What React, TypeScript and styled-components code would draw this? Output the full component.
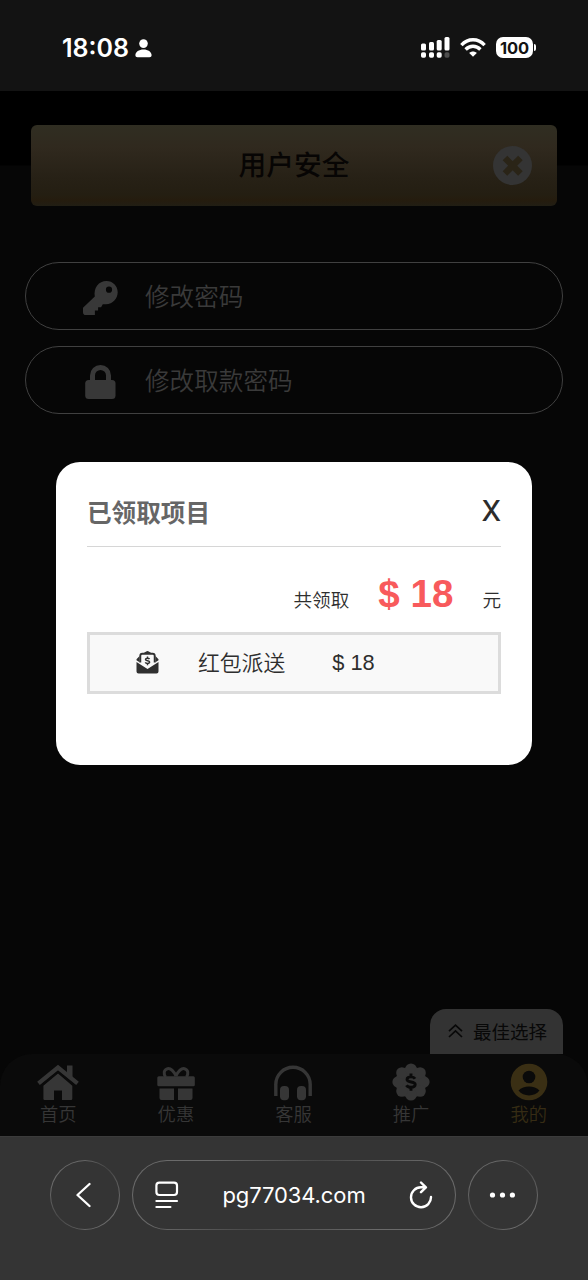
import React from 'react';
import styled, { createGlobalStyle } from 'styled-components';

const cjk = '"Liberation Sans", "Noto Sans CJK SC", sans-serif';

const GlobalStyle = createGlobalStyle`
  *, *::before, *::after { box-sizing: border-box; }
  body { margin: 0; background: #343434; font-family: ${cjk}; }
  h1, h2, p { margin: 0; }
  button { border: 0; padding: 0; background: none; font: inherit; color: inherit; }
  svg { display: block; flex: none; }
`;

const Screen = styled.div`
  width: 588px;
  height: 1280px;
  display: flex;
  flex-direction: column;
  overflow: hidden;
`;

const StatusBar = styled.header`
  height: 91px;
  flex: none;
  display: flex;
  justify-content: space-between;
  align-items: center;
  padding: 4px 52px 0 62px;
  background: #131313;
  color: #fff;
`;

const Clock = styled.div`
  display: flex;
  align-items: center;
  gap: 6px;
  padding-top: 1px;
  font: 600 25px/30px Inter, sans-serif;
  white-space: nowrap;
`;

const StatusIcons = styled.div`
  display: flex;
  align-items: center;
  gap: 10px;
`;

const Battery = styled.div`
  display: flex;
  align-items: center;
  gap: 1px;
`;

const BatteryBody = styled.div`
  width: 37px;
  height: 21px;
  border-radius: 7px;
  background: #fff;
  color: #131313;
  font: 700 16.5px/22px Inter, sans-serif;
  letter-spacing: -0.2px;
  text-align: center;
`;

const BatteryTip = styled.div`
  width: 2px;
  height: 7px;
  border-radius: 0 2px 2px 0;
  background: #fff;
`;

const Page = styled.main`
  position: relative;
  height: 1045px;
  flex: none;
  display: flex;
  flex-direction: column;
  background: linear-gradient(#000 0 74px, #060606 75px);
`;

const TitleBar = styled.div`
  height: 81px;
  margin: 34px 31px 0;
  flex: none;
  display: grid;
  grid-template-columns: 1fr auto 1fr;
  align-items: center;
  padding: 0 25px;
  border-radius: 6px;
  background: linear-gradient(#302e22, #30291e 28%, #272116 65%, #241e12 86%, #251c0e 93%, #211e14);
`;

const Title = styled.h1`
  grid-column: 2;
  color: #070504;
  font-size: 27.7px;
  line-height: 40px;
  font-weight: 500;
`;

const RoundClose = styled.button`
  justify-self: end;
  width: 39px;
  height: 39px;
`;

const Options = styled.div`
  margin: 56px 25px 0;
  display: flex;
  flex-direction: column;
  gap: 16px;
`;

const Option = styled.button`
  height: 68px;
  display: flex;
  align-items: center;
  gap: 27px;
  padding: 3px 0 0 54px;
  border: 1px solid #404040;
  border-radius: 34px;
  color: #3a3a3a;
  font-size: 24.6px;
  font-weight: 350;
  line-height: 36px;
`;

const Bottom = styled.div`
  margin-top: auto;
  display: flex;
  flex-direction: column;
`;

const BestChoice = styled.button`
  align-self: flex-end;
  width: 133px;
  height: 45px;
  margin-right: 25px;
  display: flex;
  align-items: center;
  gap: 10px;
  padding: 0 0 1px 18px;
  border-radius: 16px 16px 0 0;
  background: #333;
  color: #080808;
  font-size: 18.5px;
  white-space: nowrap;
`;

const Tabs = styled.nav`
  height: 82px;
  display: grid;
  grid-template-columns: repeat(5, 1fr);
  border-radius: 32px 32px 0 0;
  background: #0a0a0a;
`;

const Tab = styled.button<{ $active?: boolean }>`
  display: flex;
  flex-direction: column;
  align-items: center;
  padding: 8px 1px 0 0;
  color: ${(p) => (p.$active ? '#362c14' : '#363636')};
  font-size: 18.3px;
  font-weight: 350;
  line-height: 26px;
`;

const Dialog = styled.section`
  position: absolute;
  left: 56px;
  top: 371px;
  width: 476px;
  height: 303px;
  padding: 0 31px;
  border-radius: 24px;
  background: #fff;
  color: #2e2e2e;
`;

const DialogHeader = styled.div`
  height: 85px;
  display: flex;
  align-items: center;
  justify-content: space-between;
  padding-top: 15px;
  border-bottom: 1px solid #d6d6d6;
`;

const DialogTitle = styled.h2`
  padding-top: 4px;
  color: #666;
  font-size: 24.6px;
  line-height: 36px;
  font-weight: 700;
`;

const DialogClose = styled.button`
  padding-bottom: 1px;
  color: #2c2c2c;
  font: 500 28px/34px Inter, sans-serif;
`;

const Total = styled.div`
  height: 85px;
  display: flex;
  align-items: baseline;
  justify-content: flex-end;
  padding-top: 22px;
  font-size: 18.6px;
  font-weight: 350;
`;

const TotalAmount = styled.strong`
  margin: 0 29px;
  color: #f85a5c;
  font-size: 38.6px;
  line-height: 50px;
  font-weight: 700;
`;

const Reward = styled.div`
  height: 62px;
  display: flex;
  align-items: center;
  padding-left: 46px;
  border: 3px solid #dcdcdc;
  background: #f9f9f9;
  font-size: 21.8px;
  font-weight: 350;
  line-height: 32px;
`;

const RewardIcon = styled.span`
  padding-bottom: 2px;
`;

const RewardName = styled.span`
  margin: 0 47px 0 39px;
  padding-top: 1px;
`;

const BrowserBar = styled.footer`
  height: 144px;
  flex: none;
  display: flex;
  justify-content: center;
  gap: 12px;
  padding-top: 24px;
  background: linear-gradient(#3b3b3b 0 1px, #343434 1px);
  color: #fff;
`;

const Glass = styled.button<{ $width: number }>`
  width: ${(p) => p.$width}px;
  height: 70px;
  display: flex;
  align-items: center;
  justify-content: ${(p) => (p.$width > 70 ? 'space-between' : 'center')};
  padding: ${(p) => (p.$width > 70 ? '0 22px' : '0 2px 0 0')};
  border: 1px solid transparent;
  border-radius: 35px;
  background:
    linear-gradient(#343434, #343434) padding-box,
    linear-gradient(135deg, #6a6a6a 20%, #484848 48%, #6a6a6a 80%) border-box;
  font: 400 22px/30px Inter, sans-serif;
  letter-spacing: -0.1px;
`;

const PersonIcon = () => (
  <svg width="17" height="19" viewBox="0 0 17 19" fill="currentColor">
    <circle cx="8.5" cy="4.6" r="4.3" />
    <path d="M0.4 16.2C0.4 12.8 4 10.4 8.5 10.4s8.1 2.4 8.1 5.8c0 1.3-.8 2-2.1 2h-12c-1.3 0-2.1-.7-2.1-2Z" />
  </svg>
);

const SignalIcon = () => (
  <svg width="29" height="21" viewBox="0 0 29 21" fill="#fff">
    <rect x="0" y="6.5" width="5" height="7" rx="1.5" />
    <rect x="8" y="5" width="5" height="8.5" rx="1.5" />
    <rect x="15.7" y="3" width="5" height="10.5" rx="1.5" />
    <rect x="23.5" y="0" width="5" height="13.5" rx="1.5" />
    <rect x="0" y="15.2" width="5" height="5.5" rx="1.7" />
    <rect x="8" y="15.2" width="5" height="5.5" rx="1.7" />
    <rect x="15.7" y="15.2" width="5" height="5.5" rx="1.7" />
    <rect x="23.5" y="15.2" width="5" height="5.5" rx="1.7" fill="#4d4d4d" />
  </svg>
);

const WifiIcon = () => (
  <svg width="26" height="19" viewBox="0 0 26 19" fill="none" stroke="#fff" strokeWidth="3.4">
    <path d="M1.4 7.1C8-.1 18-.1 24.6 7.1" />
    <path d="M5.6 11.5c4.3-4.3 10.5-4.3 14.8 0" />
    <path d="M9.2 14.9c2.1-2 5.5-2 7.6 0L13 18.7Z" fill="#fff" stroke="none" />
  </svg>
);

const CloseCircleIcon = () => (
  <svg width="39" height="39" viewBox="0 0 39 39">
    <circle cx="19.5" cy="19.5" r="19.5" fill="#343434" />
    <path d="m12 12 15.4 15.4M27.4 12 12 27.4" stroke="#2a2417" strokeWidth="6.4" />
  </svg>
);

const KeyIcon = () => (
  <svg width="38" height="36" viewBox="0 0 38 36" fill="#383838">
    <path
      fillRule="evenodd"
      d="M26.5 1C32.8 1 37.7 5.9 37.7 12.2S32.8 24.200 26 24.200h-3.200l-1.700 3h-3v3.300h-3.200v4.500H5.800Q3 35 3 32.200v-4.400L14.800 16.600C13.300 7.800 18.800 1 26.500 1ZM29 6.600a3.100 3.100 0 1 0 0 6.200 3.100 3.100 0 0 0 0-6.200Z"
    />
  </svg>
);

const LockIcon = () => (
  <svg width="38" height="36" viewBox="0 0 38 36">
    <rect x="5.200" y="16" width="30.300" height="19" rx="3.500" fill="#383838" />
    <path d="M12.500 19v-7.500a8 8 0 0 1 16 0V19" fill="none" stroke="#383838" strokeWidth="5" />
  </svg>
);

const ChevronsUpIcon = () => (
  <svg width="15" height="14" viewBox="0 0 15 14" fill="none" stroke="#080808" strokeWidth="1.7">
    <path d="m1 7.200 6.500-6 6.500 6M1 13l6.500-6 6.500 6" />
  </svg>
);

const HomeIcon = () => (
  <svg width="42" height="40" viewBox="0 0 42 40" fill="#363636">
    <path d="M30 3.500h5.500v14L30 12.500ZM6.400 23.800 21 11.400l14.300 12.400v13q0 1.200-1.200 1.200H25v-9.500h-8V38H7.600q-1.200 0-1.200-1.200Z" />
    <path d="M1.500 21.300 21 5.500l19.500 15.800" fill="none" stroke="#363636" strokeWidth="4.200" />
    <path d="M3.500 24.200 21 9.900l17.500 14.300" fill="none" stroke="#0a0a0a" strokeWidth="1.500" />
  </svg>
);

const GiftIcon = () => (
  <svg width="40" height="40" viewBox="0 0 40 40" fill="#363636">
    <rect x="1.300" y="14.200" width="37.500" height="10" rx="1.500" />
    <path d="M3.500 26.400h14.500V38H5.500q-2 0-2-2ZM22 26.400h14.500V36q0 2-2 2H22Z" />
    <path
      d="M20 14C17 8 14 6.200 11.500 6.700 7.500 7.700 7.500 12 9.500 15M20 14c3-6 6-7.800 8.500-7.300 4 1 4 5.300 2 8.300"
      fill="none"
      stroke="#363636"
      strokeWidth="3"
    />
  </svg>
);

const HeadsetIcon = () => (
  <svg width="40" height="40" viewBox="0 0 40 40" fill="#363636">
    <path d="M2.800 34V22.500a17.200 17.200 0 0 1 34.400 0V34" fill="none" stroke="#363636" strokeWidth="3.400" />
    <rect x="7" y="24" width="9" height="14.300" rx="4" />
    <rect x="24" y="24" width="9" height="14.300" rx="4" />
  </svg>
);

const lobes = Array.from({ length: 8 }, (_, i) => (i * Math.PI) / 4);

const DollarMark = ({ x, y, scale, color }: { x: number; y: number; scale: number; color: string }) => (
  <path
    transform={`translate(${x} ${y}) scale(${scale})`}
    d="M4-3.300C3.200-4.700 1.800-5.100 0-5.100c-2.300 0-4 .9-4 2.600 0 3.600 8.200 1.400 8.200 5.100C4.200 4.400 2.400 5.300 0 5.300c-2.100 0-3.700-.7-4.500-2.100M0-8.600v3.500M0 5.300v3.500"
    fill="none"
    stroke={color}
    strokeWidth="2.900"
  />
);

const PromoIcon = () => (
  <svg width="40" height="40" viewBox="0 0 40 40" fill="#363636">
    <circle cx="20" cy="20" r="15.500" />
    {lobes.map((a) => (
      <circle key={a} cx={20 + 12.9 * Math.cos(a)} cy={20 + 12.9 * Math.sin(a)} r="5.700" />
    ))}
    <DollarMark x={20} y={20} scale={1} color="#0a0a0a" />
  </svg>
);

const ProfileIcon = () => (
  <svg width="40" height="40" viewBox="0 0 40 40">
    <circle cx="20" cy="20" r="18.300" fill="#3a2f14" />
    <circle cx="20" cy="15" r="6.300" fill="#0a0a0a" />
    <path d="M9.500 28.500c5-5.400 16-5.400 21 0-5 6.500-16 6.500-21 0Z" fill="#0a0a0a" />
  </svg>
);

const EnvelopeIcon = () => (
  <svg width="23" height="23" viewBox="0 0 23 23" fill="#303030">
    <path d="M.5 11 11.500 18l11-7v9.500q0 2-2 2h-18q-2 0-2-2Z" />
    <path d="M.5 9.300V8.200L3.600 5v6.300ZM22.500 9.300V8.200L19.400 5v6.300ZM7 2.500 10.200.4q1.300-.8 2.600 0L16 2.500Z" />
    <path d="M4.300 11.500V4.800q0-2 2-2h10.400q2 0 2 2v6.700" fill="none" stroke="#303030" strokeWidth="1.900" />
    <DollarMark x={11.5} y={9.8} scale={0.5} color="#303030" />
  </svg>
);

const BackIcon = () => (
  <svg width="16" height="26" viewBox="0 0 16 26" fill="none" stroke="#fff" strokeWidth="2.300" strokeLinecap="round" strokeLinejoin="round">
    <path d="M13.500 2 1.500 13l12 11" />
  </svg>
);

const ReaderIcon = () => (
  <svg width="24" height="28" viewBox="0 0 24 28" fill="none" stroke="#fff" strokeWidth="2.200" strokeLinecap="round">
    <rect x="1.400" y="1.600" width="20.600" height="12.400" rx="3" />
    <path d="M1.400 20h20.600M1.400 26h14" />
  </svg>
);

const ReloadIcon = () => (
  <svg width="24" height="28" viewBox="0 0 24 28" fill="none" stroke="#fff" strokeWidth="2.400" strokeLinecap="round" strokeLinejoin="round">
    <path d="M22 16a10 10 0 1 1-10-9.700h4.500M12 1.500l4.900 4.900-4.900 4.800" />
  </svg>
);

const MoreIcon = () => (
  <svg width="26" height="6" viewBox="0 0 26 6" fill="#fff">
    <circle cx="3.500" cy="3" r="2.600" />
    <circle cx="13.500" cy="3" r="2.600" />
    <circle cx="23.400" cy="3" r="2.600" />
  </svg>
);

const tabs = [
  { label: '首页', icon: <HomeIcon /> },
  { label: '优惠', icon: <GiftIcon /> },
  { label: '客服', icon: <HeadsetIcon /> },
  { label: '推广', icon: <PromoIcon /> },
  { label: '我的', icon: <ProfileIcon />, active: true },
];

export default function App() {
  return (
    <Screen>
      <GlobalStyle />
      <StatusBar>
        <Clock>
          18:08
          <PersonIcon />
        </Clock>
        <StatusIcons>
          <SignalIcon />
          <WifiIcon />
          <Battery>
            <BatteryBody>100</BatteryBody>
            <BatteryTip />
          </Battery>
        </StatusIcons>
      </StatusBar>

      <Page>
        <TitleBar>
          <Title>用户安全</Title>
          <RoundClose>
            <CloseCircleIcon />
          </RoundClose>
        </TitleBar>
        <Options>
          <Option>
            <KeyIcon />
            修改密码
          </Option>
          <Option>
            <LockIcon />
            修改取款密码
          </Option>
        </Options>
        <Bottom>
          <BestChoice>
            <ChevronsUpIcon />
            最佳选择
          </BestChoice>
          <Tabs>
            {tabs.map((tab) => (
              <Tab key={tab.label} $active={tab.active}>
                {tab.icon}
                {tab.label}
              </Tab>
            ))}
          </Tabs>
        </Bottom>

        <Dialog>
          <DialogHeader>
            <DialogTitle>已领取项目</DialogTitle>
            <DialogClose>X</DialogClose>
          </DialogHeader>
          <Total>
            共领取
            <TotalAmount>$ 18</TotalAmount>
            元
          </Total>
          <Reward>
            <RewardIcon>
              <EnvelopeIcon />
            </RewardIcon>
            <RewardName>红包派送</RewardName>
            $ 18
          </Reward>
        </Dialog>
      </Page>

      <BrowserBar>
        <Glass $width={70}>
          <BackIcon />
        </Glass>
        <Glass $width={324}>
          <ReaderIcon />
          pg77034.com
          <ReloadIcon />
        </Glass>
        <Glass $width={70}>
          <MoreIcon />
        </Glass>
      </BrowserBar>
    </Screen>
  );
}
